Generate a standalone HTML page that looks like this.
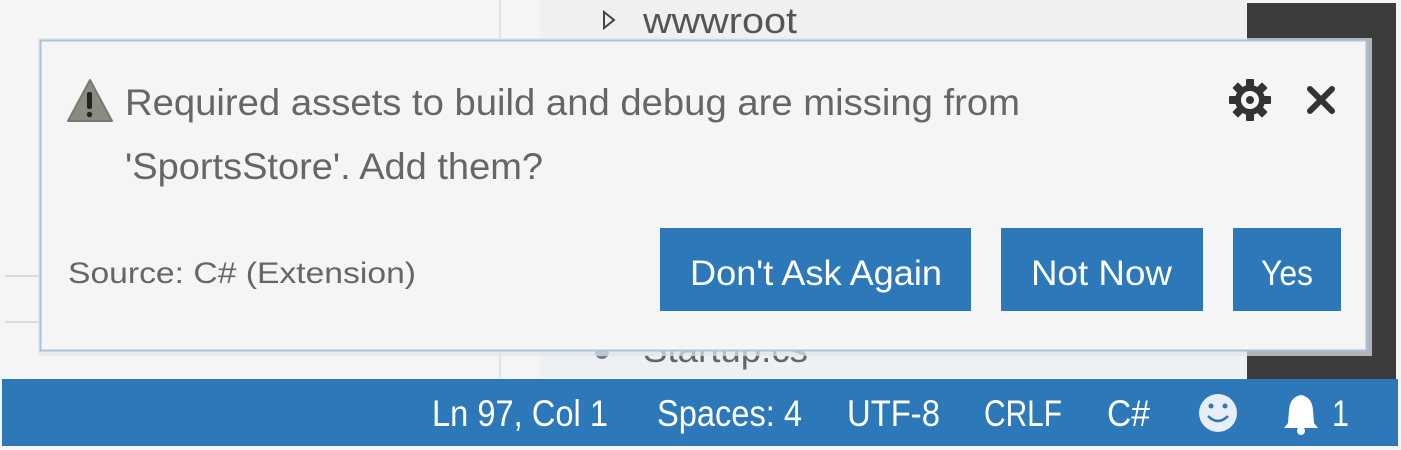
<!DOCTYPE html>
<html><head><meta charset="utf-8"><style>
html,body{margin:0;padding:0;background:#f5f5f5;width:1401px;height:450px;overflow:hidden}
svg{display:block}
text{font-family:"Liberation Sans",sans-serif}
</style></head><body>
<svg width="1401" height="450" viewBox="0 0 1401 450" xmlns="http://www.w3.org/2000/svg">
<rect width="1401" height="450" fill="#f5f5f5"/>
<rect x="540" y="0" width="707" height="378" fill="#eef0f2"/>
<line x1="500" y1="0" x2="500" y2="378" stroke="#dfe4ea" stroke-width="2"/>
<rect x="1247" y="3" width="149" height="376" fill="#3c3c3c"/>
<path d="M604 12 L614 20 L604 28 Z" fill="none" stroke="#444" stroke-width="2"/>
<text x="643" y="33" font-size="36" fill="#555" textLength="154" lengthAdjust="spacingAndGlyphs">wwwroot</text>
<circle cx="602" cy="352" r="7" fill="#6a7f98"/>
<text x="643" y="362" font-size="36" fill="#666" textLength="165" lengthAdjust="spacingAndGlyphs">Startup.cs</text>
<line x1="5" y1="276" x2="40" y2="276" stroke="#d5dce4" stroke-width="2"/>
<line x1="5" y1="322" x2="40" y2="322" stroke="#d5dce4" stroke-width="2"/>
<rect x="38" y="38" width="1334" height="318" fill="#e3e6ea" opacity="0.7"/>
<rect x="40.5" y="40.5" width="1326" height="310" fill="#f5f5f5" stroke="#a8c3db" stroke-width="2"/>
<path d="M90 80 L112 121 L68 121 Z" fill="#8c8b82" stroke="#7a7970" stroke-width="2" stroke-linejoin="round"/>
<rect x="87" y="92" width="5" height="17" rx="2" fill="#222"/>
<circle cx="89.5" cy="114.5" r="2.7" fill="#222"/>
<text x="125" y="115" font-size="37" fill="#666" textLength="895" lengthAdjust="spacingAndGlyphs">Required assets to build and debug are missing from</text>
<text x="125" y="179" font-size="37" fill="#666" textLength="418" lengthAdjust="spacingAndGlyphs">'SportsStore'. Add them?</text>
<text x="68" y="283" font-size="30" fill="#666" textLength="348" lengthAdjust="spacingAndGlyphs">Source: C# (Extension)</text>
<g transform="translate(1250,100)" fill="#333">
<g id="t"><rect x="-4" y="-21" width="8" height="42" rx="1"/></g>
<use href="#t" transform="rotate(45)"/><use href="#t" transform="rotate(90)"/><use href="#t" transform="rotate(135)"/>
<circle r="15"/>
<circle r="9" fill="#f5f5f5"/>
<circle r="4"/>
</g>
<path d="M1310 89 L1332 111 M1332 89 L1310 111" stroke="#333" stroke-width="6" stroke-linecap="round"/>
<rect x="660" y="228" width="311" height="83" fill="#2c78b9"/>
<rect x="1001" y="228" width="202" height="83" fill="#2c78b9"/>
<rect x="1233" y="228" width="108" height="83" fill="#2c78b9"/>
<text x="690" y="285" font-size="35" fill="#fff" textLength="252" lengthAdjust="spacingAndGlyphs">Don't Ask Again</text>
<text x="1031" y="285" font-size="35" fill="#fff" textLength="141" lengthAdjust="spacingAndGlyphs">Not Now</text>
<text x="1261" y="285" font-size="35" fill="#fff" textLength="52" lengthAdjust="spacingAndGlyphs">Yes</text>
<rect x="2" y="379" width="1396" height="67" fill="#2c78b9"/>
<g fill="#fff" font-size="37">
<text x="432" y="426" textLength="176" lengthAdjust="spacingAndGlyphs">Ln 97, Col 1</text>
<text x="657" y="426" textLength="145" lengthAdjust="spacingAndGlyphs">Spaces: 4</text>
<text x="847" y="426" textLength="93" lengthAdjust="spacingAndGlyphs">UTF-8</text>
<text x="984" y="426" textLength="78" lengthAdjust="spacingAndGlyphs">CRLF</text>
<text x="1107" y="426" textLength="43" lengthAdjust="spacingAndGlyphs">C#</text>
<text x="1332" y="426" textLength="17" lengthAdjust="spacingAndGlyphs">1</text>
</g>
<circle cx="1218" cy="413" r="19" fill="#e8eef5"/>
<circle cx="1211" cy="406" r="2.5" fill="#2c78b9"/>
<circle cx="1225" cy="406" r="2.5" fill="#2c78b9"/>
<path d="M1208 416 Q1218 426 1228 416" fill="none" stroke="#2c78b9" stroke-width="2.5"/>
<path d="M1301 395 Q1290 397 1289 410 L1288 423 L1284 428 L1318 428 L1314 423 L1313 410 Q1312 397 1301 395 Z" fill="#fff"/>
<circle cx="1301" cy="431" r="4" fill="#fff"/>
</svg>
</body></html>
